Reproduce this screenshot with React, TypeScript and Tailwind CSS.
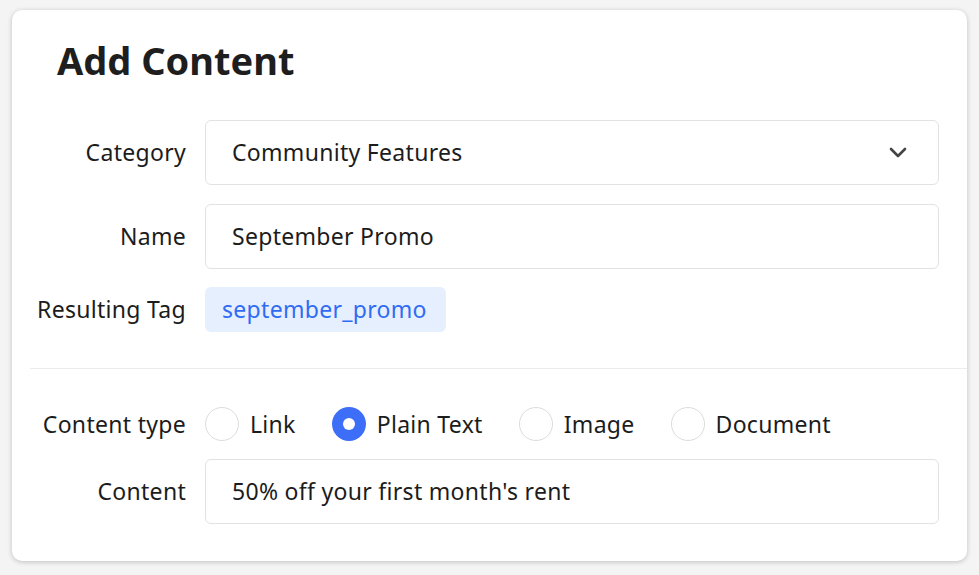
import React from "react";

const font = { fontFamily: "'Noto Sans', Lato, sans-serif" };

function Radio({ label, checked }: { label: string; checked?: boolean }) {
  return (
    <div className="flex items-center gap-[11px]">
      {checked ? (
        <span className="flex h-[34px] w-[34px] items-center justify-center rounded-full bg-[#3d6ef7]">
          <span className="h-[12px] w-[12px] rounded-full bg-white" />
        </span>
      ) : (
        <span className="h-[34px] w-[34px] rounded-full border-[1.5px] border-[#dcdcdc] bg-white" />
      )}
      <span className="text-[23px] tracking-[0.3px] text-[#1c1c1c]">{label}</span>
    </div>
  );
}

function Row({ label, children }: { label: string; children: React.ReactNode }) {
  return (
    <div className="flex items-center">
      <div className="w-[174px] shrink-0 text-right text-[23px] tracking-[0.3px] text-[#1c1c1c]">{label}</div>
      <div className="ml-[19px] mr-[28px] flex-1">{children}</div>
    </div>
  );
}

export default function App() {
  return (
    <div className="h-[575px] w-[979px] bg-[#f4f4f4] pl-[12px] pt-[10px]" style={font}>
      <div className="flex h-[551px] w-[955px] flex-col rounded-[10px] bg-white shadow-[0_1px_5px_rgba(0,0,0,0.22)]">
        <h1 className="pl-[45px] pt-[27px] text-[38px] font-bold leading-[46px] text-[#1e1e1e]">
          Add Content
        </h1>
        <div className="mt-[37px]">
          <Row label="Category">
            <div className="flex h-[65px] items-center justify-between rounded-[6px] border border-[#e2e2e2] pl-[26px] pr-[31px]">
              <span className="text-[23px] tracking-[0.3px] text-[#1c1c1c]">Community Features</span>
              <svg width="18" height="11" viewBox="0 0 18 11" fill="none">
                <path d="M2 2l7 7 7-7" stroke="#444" strokeWidth="2.6" strokeLinecap="round" strokeLinejoin="round" />
              </svg>
            </div>
          </Row>
          <div className="mt-[19px]">
            <Row label="Name">
              <div className="flex h-[65px] items-center rounded-[6px] border border-[#e2e2e2] pl-[26px]">
                <span className="text-[23px] tracking-[0.3px] text-[#1c1c1c]">September Promo</span>
              </div>
            </Row>
          </div>
          <div className="mt-[18px]">
            <Row label="Resulting Tag">
              <div className="flex h-[45px] w-[241px] items-center rounded-[6px] bg-[#e6effd] pl-[17px]">
                <span className="text-[23px] tracking-[0.3px] text-[#2f6cf3]">september_promo</span>
              </div>
            </Row>
          </div>
        </div>
        <div className="ml-[18px] mt-[36px] border-t border-[#ececec]" />
        <div className="mt-[38px]">
          <Row label="Content type">
            <div className="flex items-center gap-[36px]">
              <Radio label="Link" />
              <Radio label="Plain Text" checked />
              <Radio label="Image" />
              <Radio label="Document" />
            </div>
          </Row>
        </div>
        <div className="mt-[17px]">
          <Row label="Content">
            <div className="flex h-[65px] items-center rounded-[6px] border border-[#e2e2e2] pl-[26px]">
              <span className="text-[23px] tracking-[0.3px] text-[#1c1c1c]">50% off your first month's rent</span>
            </div>
          </Row>
        </div>
      </div>
    </div>
  );
}
